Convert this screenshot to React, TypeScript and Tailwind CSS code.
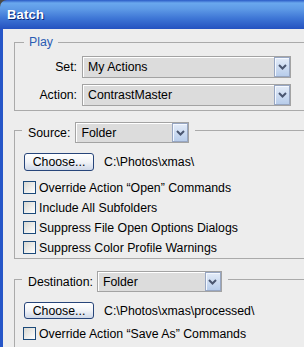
import React from "react";

function Chevron() {
  return (
    <svg width="9" height="6" viewBox="0 0 9 6" className="block">
      <polyline points="1,1 4.5,4.5 8,1" fill="none" stroke="#4a5670" strokeWidth="2" />
    </svg>
  );
}

function Select({ label, cls }: { label: string; cls: string }) {
  return (
    <div className={`flex border border-[#a3a3a3] bg-[#dcdcdc] ${cls}`}>
      <div className="flex flex-1 items-center pl-[5px] text-black shadow-[inset_1px_1px_0_#ffffff]">{label}</div>
      <div className="flex w-[16px] items-center justify-center border border-[#97a6c2] bg-gradient-to-b from-[#e4ecf8] to-[#b8cdeb] shadow-[inset_1px_1px_0_#f4f8ff]">
        <Chevron />
      </div>
    </div>
  );
}

function Check({ label, first }: { label: string; first?: boolean }) {
  return (
    <div className={`ml-[8px] flex h-[13px] items-center ${first ? "mt-[10px]" : "mt-[7px]"}`}>
      <div className="h-[13px] w-[13px] border border-[#1c4a7a] bg-gradient-to-br from-[#d8d8d2] to-[#ffffff]" />
      <span className="ml-[3px] whitespace-nowrap">{label}</span>
    </div>
  );
}

function Choose({ path, h }: { path: string; h: string }) {
  return (
    <div className="ml-[9px] mt-[10px] flex items-center">
      <div className={`flex w-[70px] items-center justify-center rounded-[3px] border border-[#27457a] bg-gradient-to-b from-[#ffffff] via-[#f1f3f7] to-[#cfd8e8] ${h}`}>
        Choose...
      </div>
      <span className="ml-[10px] whitespace-nowrap">{path}</span>
    </div>
  );
}

export default function App() {
  return (
    <div className="h-[347px] w-[304px] overflow-hidden bg-[#4b4a45] font-['Liberation_Sans',Tahoma,Arial,sans-serif] text-[12.3px] leading-[14px] text-black">
      <div className="flex h-full w-full flex-col overflow-hidden rounded-tl-[7px]">
        {/* Title bar */}
        <div className="flex h-[29px] shrink-0 items-center bg-[linear-gradient(to_bottom,#2a5ac6_0px,#6aa8ee_3px,#5e9ae6_9px,#3f77d6_18px,#2452c0_29px)] pl-[7px] pt-[1px]">
          <span className="text-[13px] font-bold tracking-[0.2px] text-white [text-shadow:1px_1px_0_#0b2a78]">Batch</span>
        </div>
        {/* Body */}
        <div className="flex flex-1 flex-col border-l-[3px] border-[#2656c8] bg-[#ededed] pl-[11px]">
          {/* Play */}
          <div className="mt-[13px] w-[330px] border border-[#aaaaaa] pb-[4px]">
            <div className="-mt-[8px] ml-[9px] flex h-[14px] w-fit items-center bg-[#ededed] px-[5px] text-[#2b5cb3]">Play</div>
            <div className="mt-[7px] flex items-center">
              <div className="w-[62px] text-right">Set:</div>
              <Select label="My Actions" cls="ml-[5px] h-[22px] w-[209px]" />
            </div>
            <div className="mt-[6px] flex items-center">
              <div className="w-[62px] text-right">Action:</div>
              <Select label="ContrastMaster" cls="ml-[5px] h-[22px] w-[209px]" />
            </div>
          </div>

          {/* Source */}
          <div className="mt-[19px] w-[330px] border border-[#aaaaaa] pb-[4px]">
            <div className="-mt-[9px] ml-[7px] flex h-[21px] w-fit items-center bg-[#ededed] pl-[6px] pr-[6px]">
              <span>Source:</span>
              <Select label="Folder" cls="ml-[5px] h-[21px] w-[114px]" />
            </div>
            <Choose path="C:\Photos\xmas\" h="h-[18px]" />
            <Check first label="Override Action “Open” Commands" />
            <Check label="Include All Subfolders" />
            <Check label="Suppress File Open Options Dialogs" />
            <Check label="Suppress Color Profile Warnings" />
          </div>

          {/* Destination */}
          <div className="mt-[20px] w-[330px] border border-[#aaaaaa] pb-[10px]">
            <div className="-mt-[9px] ml-[7px] flex h-[21px] w-fit items-center bg-[#ededed] pl-[6px] pr-[6px]">
              <span>Destination:</span>
              <Select label="Folder" cls="ml-[4px] h-[21px] w-[125px]" />
            </div>
            <Choose path="C:\Photos\xmas\processed\" h="h-[17px]" />
            <div className="ml-[8px] mt-[8px] flex h-[13px] items-center">
              <div className="h-[13px] w-[13px] border border-[#1c4a7a] bg-gradient-to-br from-[#d8d8d2] to-[#ffffff]" />
              <span className="ml-[3px] whitespace-nowrap">Override Action “Save As” Commands</span>
            </div>
          </div>
        </div>
      </div>
    </div>
  );
}
